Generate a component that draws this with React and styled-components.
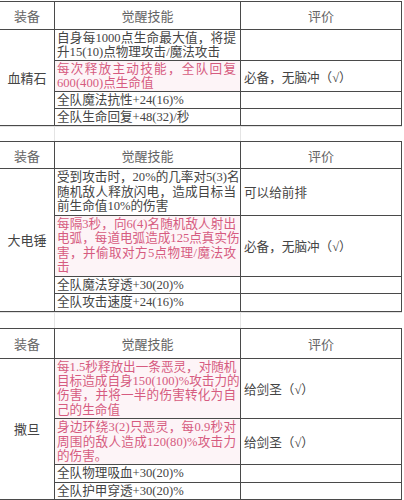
import React from "react";
import styled, { createGlobalStyle } from "styled-components";

const GlobalStyle = createGlobalStyle`
  html, body {
    margin: 0;
    padding: 0;
    background: #ffffff;
  }
  body {
    font-family: "Liberation Serif", "Noto Sans CJK SC", serif;
    color: #3d3d3d;
  }
`;

const Page = styled.div`
  width: 404px;
  padding-top: 1px;
  display: flex;
  flex-direction: column;
`;

const Table = styled.div`
  width: 402px;
  display: grid;
  grid-template-columns: 55px 186px 161px;
  border-top: 1px solid #4a4a4a;
`;

const Cell = styled.div`
  border-right: 1px solid #4a4a4a;
  border-bottom: 1px solid #4a4a4a;
  box-sizing: border-box;
  font-size: 12.6px;
`;

const HeadCell = styled(Cell)`
  height: ${(p) => p.$h}px;
  display: flex;
  align-items: center;
  justify-content: center;
  color: #666;
  font-size: 13px;
`;

const NameCell = styled(Cell)`
  grid-row: span ${(p) => p.$span};
  display: flex;
  align-items: center;
  justify-content: center;
  color: #444;
  font-size: 13px;
`;

const SkillCell = styled(Cell)`
  padding: 1px 4px 1px 2px;
  line-height: ${(p) => p.$lh}px;
  color: ${(p) => (p.$red ? "#d65b80" : "#444")};
  background: ${(p) => (p.$red ? "#fdf4f7" : "transparent")};
`;

const Line = styled.span`
  display: block;
  white-space: nowrap;
  text-align: left;
  text-align-last: ${(p) => (p.$fill ? "justify" : "left")};
  text-justify: inter-character;
`;

const NoteCell = styled(Cell)`
  display: flex;
  align-items: center;
  padding-left: 3px;
  color: #444;
  white-space: nowrap;
`;

const Spacer = styled.div`
  width: 402px;
  height: ${(p) => p.$h}px;
  display: grid;
  grid-template-columns: 55px 186px 161px;
  border-top: 1px solid #e2e2e2;
  box-sizing: border-box;
`;

const SpacerCol = styled.div`
  border-right: 1px solid #e4e4e4;
`;

const tables = [
  {
    name: "血精石",
    head: 28,
    lh: 14,
    rows: [
      { lines: ["自身每1000点生命最大值，将提", "升15(10)点物理攻击/魔法攻击"] },
      { red: true, lines: ["每次释放主动技能，全队回复", "600(400)点生命值"], note: "必备，无脑冲（√）" },
      { lines: ["全队魔法抗性+24(16)%"] },
      { lines: ["全队生命回复+48(32)/秒"] },
    ],
  },
  {
    name: "大电锤",
    head: 27,
    lh: 14.5,
    rows: [
      {
        lines: ["受到攻击时，20%的几率对5(3)名", "随机敌人释放闪电，造成目标当", "前生命值10%的伤害"],
        note: "可以给前排",
      },
      {
        red: true,
        lines: ["每隔3秒，向6(4)名随机敌人射出", "电弧，每道电弧造成125点真实伤", "害，并偷取对方5点物理/魔法攻", "击"],
        note: "必备，无脑冲（√）",
      },
      { lines: ["全队魔法穿透+30(20)%"] },
      { lines: ["全队攻击速度+24(16)%"] },
    ],
  },
  {
    name: "撒旦",
    head: 30,
    lh: 14.4,
    rows: [
      {
        red: true,
        lines: ["每1.5秒释放出一条恶灵，对随机", "目标造成自身150(100)%攻击力的", "伤害，并将一半的伤害转化为自", "己的生命值"],
        note: "给剑圣（√）",
      },
      {
        red: true,
        lines: ["身边环绕3(2)只恶灵，每0.9秒对", "周围的敌人造成120(80)%攻击力", "的伤害。"],
        note: "给剑圣（√）",
      },
      { lines: ["全队物理吸血+30(20)%"] },
      { lines: ["全队护甲穿透+30(20)%"] },
    ],
  },
];

function GearTable({ data }) {
  return (
    <Table>
      <HeadCell $h={data.head}>装备</HeadCell>
      <HeadCell $h={data.head}>觉醒技能</HeadCell>
      <HeadCell $h={data.head}>评价</HeadCell>
      <NameCell $span={data.rows.length}>{data.name}</NameCell>
      {data.rows.map((row, i) => (
        <React.Fragment key={i}>
          <SkillCell $red={row.red} $lh={data.lh}>
            {row.lines.map((l, j) => (
              <Line key={j} $fill={j < row.lines.length - 1}>
                {l}
              </Line>
            ))}
          </SkillCell>
          <NoteCell>{row.note || ""}</NoteCell>
        </React.Fragment>
      ))}
    </Table>
  );
}

function Gap({ h }) {
  return (
    <Spacer $h={h}>
      <SpacerCol />
      <SpacerCol />
      <div />
    </Spacer>
  );
}

export default function App() {
  return (
    <Page>
      <GlobalStyle />
      <GearTable data={tables[0]} />
      <Gap h={15} />
      <GearTable data={tables[1]} />
      <Gap h={16} />
      <GearTable data={tables[2]} />
    </Page>
  );
}
